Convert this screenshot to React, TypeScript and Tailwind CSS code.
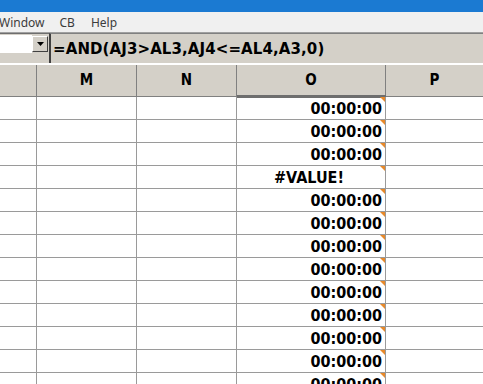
const rows = [
  "00:00:00",
  "00:00:00",
  "00:00:00",
  "#VALUE!",
  "00:00:00",
  "00:00:00",
  "00:00:00",
  "00:00:00",
  "00:00:00",
  "00:00:00",
  "00:00:00",
  "00:00:00",
  "00:00:00",
];

const cellFont = { fontFamily: '"DejaVu Sans", Verdana, sans-serif' };
const narrowFont = { fontFamily: '"DejaVu Sans Condensed", "DejaVu Sans", Tahoma, sans-serif', fontStretch: "condensed" };

function HeaderCell({ label, className }: { label: string; className: string }) {
  return (
    <div
      className={`h-full shrink-0 flex items-center justify-center border-r border-[#808080] text-[15px] font-bold text-black ${className}`}
      style={narrowFont}
    >
      {label}
    </div>
  );
}

export default function App() {
  return (
    <div className="w-[483px] h-[384px] overflow-hidden bg-white flex flex-col">
      {/* title bar */}
      <div className="h-[12px] shrink-0 bg-[#1b7ad2]" />

      {/* menu bar */}
      <div
        className="h-[20px] shrink-0 bg-[#f0f0f0] flex items-center pt-[2px] text-[12px] text-[#3c3c3c]"
        style={{ fontFamily: '"Noto Sans", "Liberation Sans", sans-serif' }}
      >
        <span className="-ml-[1px]">Window</span>
        <span className="ml-[15px]">CB</span>
        <span className="ml-[16px]">Help</span>
      </div>

      {/* formula bar */}
      <div className="h-[33px] shrink-0 bg-[#d4d0c8] border-t border-[#a0a0a0] border-b-2 border-b-[#ffffff] shadow-[inset_0_1px_0_#6e6e6e] flex">
        <div className="pt-[2px] flex items-start">
          <div className="w-[32px] h-[18px] bg-white" />
          <div className="w-[16px] h-[16px] mt-[1px] bg-[#d4d0c8] border border-t-white border-l-white border-r-[#404040] border-b-[#404040] flex items-center justify-center">
            <svg width="7" height="4" viewBox="0 0 7 4">
              <path d="M0 0h7L3.5 4z" fill="#000" />
            </svg>
          </div>
        </div>
        <div className="ml-[1px] flex-1 border-l-2 border-l-[#404040] pl-[2px] pt-[2px] border-t border-t-[#808080]">
          <span className="text-[15px] font-bold text-black tracking-[0.1px]" style={cellFont}>
            =AND(AJ3&gt;AL3,AJ4&lt;=AL4,A3,0)
          </span>
        </div>
      </div>

      {/* column header */}
      <div className="h-[32px] shrink-0 bg-[#d4d0c8] flex border-b border-[#808080]">
        <HeaderCell label="" className="w-[37px]" />
        <HeaderCell label="M" className="w-[100px]" />
        <HeaderCell label="N" className="w-[100px]" />
        <div className="w-[149px] shrink-0 h-full relative">
          <HeaderCell label="O" className="w-full" />
          <div className="absolute left-0 right-0 -bottom-[2px] h-[3px] bg-[#6e6e6e]" />
        </div>
        <HeaderCell label="P" className="w-[97px] border-r-0" />
      </div>

      {/* grid */}
      <div className="flex flex-col">
        {rows.map((v, i) => (
          <div key={i} className="h-[23px] shrink-0 flex border-b border-[#9a9a9a]">
            <div className="w-[37px] shrink-0 border-r border-[#9a9a9a]" />
            <div className="w-[100px] shrink-0 border-r border-[#9a9a9a]" />
            <div className="w-[100px] shrink-0 border-r border-[#9a9a9a]" />
            <div
              className={`w-[149px] shrink-0 border-r border-[#9a9a9a] relative flex items-end text-[16px] leading-[20px] font-bold text-black ${
                v.startsWith("#") ? "justify-center pr-[4px]" : "justify-end pr-[3px]"
              }`}
              style={narrowFont}
            >
              {v}
              <svg className="absolute top-0 right-0" width="5" height="5" viewBox="0 0 5 5">
                <path d="M0 0h5v5z" fill="#e8892a" />
              </svg>
            </div>
            <div className="flex-1" />
          </div>
        ))}
      </div>
    </div>
  );
}
